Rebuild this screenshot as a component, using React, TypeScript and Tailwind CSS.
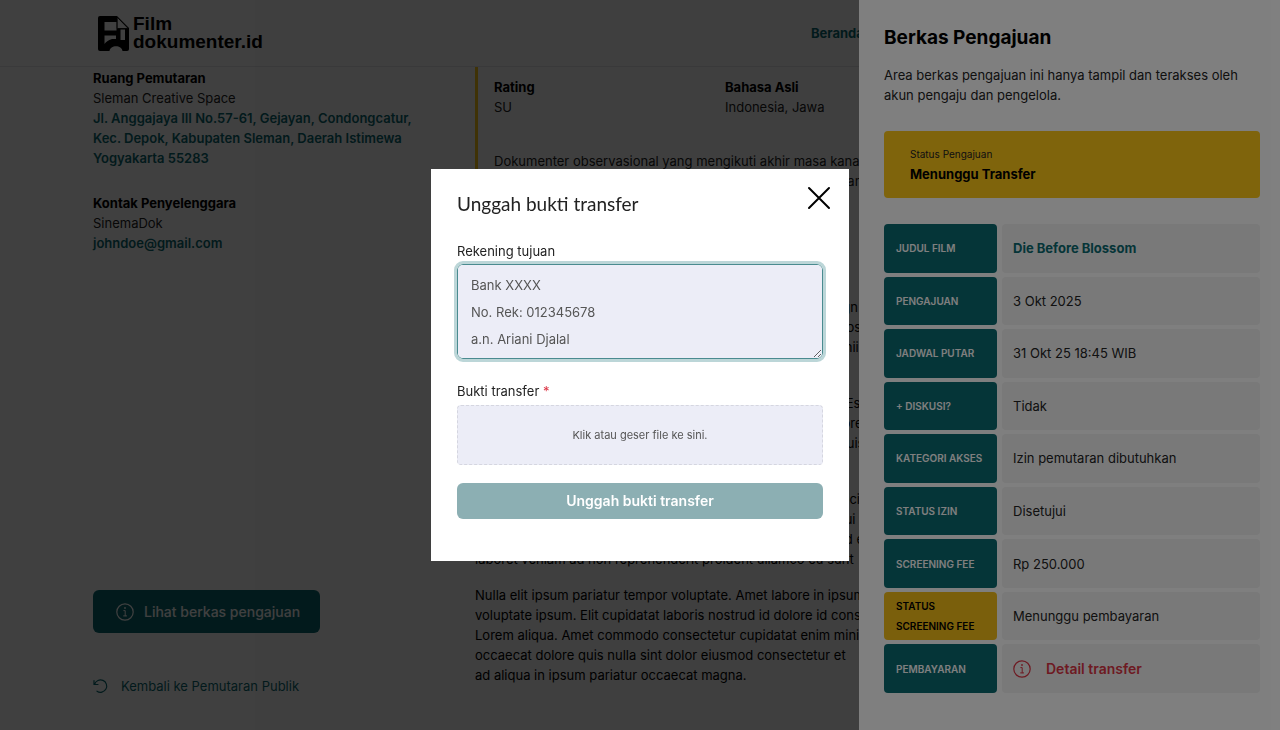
import React from 'react';

const filmInfo = [
  { label: 'Rating', value: 'SU' },
  { label: 'Bahasa Asli', value: 'Indonesia, Jawa' },
];

const paragraphs = [
  [
    'Exercitation sunt laboris aliquip tempor ea irure duis non magn n',
    'culpa laborum cillum minim est dolor sed officia elit magna dos',
    'veniam ad incididunt fugiat labore nisi commodo et dolor sit nii',
  ],
  [
    'Irure dolor in deserunt mollit aute veniam quis sint et dolor i. Est',
    'laborum anim cupidatat non proident sunt in culpa id est dolore',
    'tempor ullamco ea nostrud exercitation consequat ad anim quis',
  ],
  [
    'Reprehenderit eu sit magna id consequat aliquip sunt nisi officia',
    'duis enim tempor incididunt nisi dolor ut labore et minim sequi',
    'consectetur voluptate do ex commodo minim laboris est ea id e',
    'laboret veniam ad non reprehenderit proident ullamco eu sunt',
  ],
  [
    'Nulla elit ipsum pariatur tempor voluptate. Amet labore in ipsum',
    'voluptate ipsum. Elit cupidatat laboris nostrud id dolore id cons',
    'Lorem aliqua. Amet commodo consectetur cupidatat enim minim',
    'occaecat dolore quis nulla sint dolor eiusmod consectetur et',
    'ad aliqua in ipsum pariatur occaecat magna.',
  ],
];

const rows = [
  { label: 'Judul Film', value: 'Die Before Blossom', type: 'link' },
  { label: 'Pengajuan', value: '3 Okt 2025' },
  { label: 'Jadwal Putar', value: '31 Okt 25 18:45 WIB' },
  { label: '+ Diskusi?', value: 'Tidak' },
  { label: 'Kategori Akses', value: 'Izin pemutaran dibutuhkan' },
  { label: 'Status Izin', value: 'Disetujui' },
  { label: 'Screening Fee', value: 'Rp 250.000' },
  { label: 'Status Screening Fee', value: 'Menunggu pembayaran', highlight: true },
  { label: 'Pembayaran', value: 'Detail transfer', type: 'action' },
];

const InfoIcon: React.FC = () => (
  <svg className="w-[18px] h-[18px] shrink-0" viewBox="0 0 18 18" fill="none" stroke="currentColor" strokeWidth="1.2" strokeLinecap="round" aria-hidden="true">
    <circle cx="9" cy="9" r="8.2" />
    <path d="M7.8 7.6h1.4v5.2M7.6 12.9h3" strokeWidth="1" />
    <circle cx="9" cy="5" r="0.9" fill="currentColor" stroke="none" />
  </svg>
);

const Logo: React.FC = () => (
  <a href="#" className="flex items-center gap-1 text-black" aria-label="Filmdokumenter.id">
    <svg className="w-[31px] h-[35px]" viewBox="0 0 31 35" aria-hidden="true">
      <path d="M2 0H19L31 12V33a2 2 0 0 1-2 2H2a2 2 0 0 1-2-2V2a2 2 0 0 1 2-2Z" fill="currentColor" />
      <path d="M6.5 6H18.5V14.5H6.5ZM6.5 19.5H18V23H14C10 24 8 26 6.5 28ZM22.5 13.5H27V24H22.5ZM11.5 35C12 28.5 24 28.5 24.5 35Z" fill="#fff" />
      <path d="M19.2 1.2V12.5H30.2Z" fill="#fff" stroke="currentColor" strokeWidth="0.8" />
    </svg>
    <span className="font-['Liberation_Sans',sans-serif] text-[19px] leading-[18px] font-bold">
      Film
      <br />
      dokumenter.id
    </span>
  </a>
);

const FilmPage: React.FC = () => (
  <div className="min-h-screen flex flex-col bg-white text-[#222]">
    <header className="flex items-center justify-between h-[67px] pl-[98px] pr-[93px] border-b border-gray-200">
      <Logo />
      <nav className="w-[376px]">
        <a href="#" className="font-bold text-[#0b6a71]">Beranda</a>
      </nav>
    </header>
    <main className="flex-1 grid grid-cols-[350px_1fr] gap-8 px-[93px] pb-[34px]">
      <div className="flex flex-col justify-between items-start pt-px pr-4">
        <div className="space-y-[25px]">
          <section>
            <h3 className="font-bold text-black">Ruang Pemutaran</h3>
            <p>Sleman Creative Space</p>
            <a href="#" className="font-semibold text-[#0b6a71]">
              Jl. Anggajaya III No.57-61, Gejayan, Condongcatur, Kec. Depok, Kabupaten Sleman, Daerah Istimewa Yogyakarta 55283
            </a>
          </section>
          <section>
            <h3 className="font-bold text-black">Kontak Penyelenggara</h3>
            <p>SinemaDok</p>
            <a href="#" className="font-semibold text-[#0b6a71]">johndoe@gmail.com</a>
          </section>
        </div>
        <div className="space-y-[43px]">
          <button type="button" className="flex items-center gap-2.5 h-[43px] pl-[23px] pr-5 rounded-md bg-[#0b6a71] text-[14px] font-medium text-white">
            <InfoIcon />
            Lihat berkas pengajuan
          </button>
          <a href="#" className="flex items-center gap-3 text-[#0b6a71]">
            <svg className="w-4 h-4" viewBox="0 0 16 16" fill="none" stroke="currentColor" strokeWidth="1.2" strokeLinecap="round" aria-hidden="true">
              <path d="M1 2.5v4h4M1.6 6.2A6.2 6.2 0 1 1 4 13.2" />
            </svg>
            Kembali ke Pemutaran Publik
          </a>
        </div>
      </div>
      <div className="overflow-hidden whitespace-nowrap">
        <div className="border-l-[3px] border-[#ffc818] pl-4 pt-2.5 pb-6">
          <dl className="grid grid-cols-3">
            {filmInfo.map((item) => (
              <div key={item.label}>
                <dt className="font-bold text-black">{item.label}</dt>
                <dd>{item.value}</dd>
              </div>
            ))}
          </dl>
          <p className="mt-[34px]">
            Dokumenter observasional yang mengikuti akhir masa kanak
            <br />
            dua anak perempuan di sebuah desa, sebelum mereka akan
          </p>
        </div>
        <div className="mt-[82px] space-y-9 text-black">
          {paragraphs.slice(0, 2).map((lines) => (
            <p key={lines[0]}>
              {lines.map((line) => (
                <span key={line} className="block">{line}</span>
              ))}
            </p>
          ))}
          <div className="space-y-4">
            {paragraphs.slice(2).map((lines) => (
              <p key={lines[0]}>
                {lines.map((line) => (
                  <span key={line} className="block">{line}</span>
                ))}
              </p>
            ))}
          </div>
        </div>
      </div>
    </main>
  </div>
);

const SubmissionDrawer: React.FC = () => (
  <aside className="w-[421px] h-full overflow-y-auto bg-white pl-[25px] pr-5 pt-[26px] text-[#222]">
    <h2 className="text-[19px] leading-6 font-bold text-black">Berkas Pengajuan</h2>
    <p className="mt-[15px]">Area berkas pengajuan ini hanya tampil dan terakses oleh akun pengaju dan pengelola.</p>
    <div className="mt-[26px] px-[26px] pt-[13px] pb-3.5 rounded bg-[#ffc818]">
      <p className="text-[10px] leading-5">Status Pengajuan</p>
      <p className="font-bold text-black">Menunggu Transfer</p>
    </div>
    <div className="mt-[22px] -mx-[5px]">
      <table className="w-full h-[477px] table-fixed border-separate border-spacing-x-[5px] border-spacing-y-1">
        <tbody>
          {rows.map((row) => (
            <tr key={row.label} className="h-12">
              <th
                scope="row"
                className={`w-[113px] px-3 rounded text-left text-[10px] leading-5 font-semibold uppercase ${
                  row.highlight ? 'bg-[#f5bf18] text-black' : 'bg-[#0b6a71] text-white'
                }`}
              >
                {row.label}
              </th>
              <td className="px-[11px] rounded bg-[#f3f3f3]">
                {row.type === 'link' && <a href="#" className="font-bold text-[#0b6a71]">{row.value}</a>}
                {row.type === 'action' && (
                  <button type="button" className="flex items-center gap-[15px] text-[14px] font-semibold text-[#dc3545]">
                    <InfoIcon />
                    {row.value}
                  </button>
                )}
                {!row.type && row.value}
              </td>
            </tr>
          ))}
        </tbody>
      </table>
    </div>
  </aside>
);

const UploadModal: React.FC = () => (
  <div role="dialog" aria-modal="true" aria-labelledby="upload-title" className="w-[418px] bg-white px-[26px] pt-[17px] pb-[42px] text-[#222]">
    <div className="flex items-start justify-between">
      <h2 id="upload-title" className="pt-1 font-['Lato',sans-serif] text-[19px] leading-7">Unggah bukti transfer</h2>
      <button type="button" aria-label="Tutup" className="-mr-2 text-black">
        <svg className="w-6 h-6" viewBox="0 0 24 24" fill="none" stroke="currentColor" strokeWidth="2" strokeLinecap="round" aria-hidden="true">
          <path d="M2 2l20 20M22 2L2 22" />
        </svg>
      </button>
    </div>
    <form className="mt-[23px]">
      <label htmlFor="account" className="block">Rekening tujuan</label>
      <textarea
        id="account"
        readOnly
        defaultValue={'Bank XXXX\nNo. Rek: 012345678\na.n. Ariani Djalal'}
        className="block w-full h-[95px] mt-[3px] px-[13px] py-[7px] leading-[27px] rounded-md border border-[#4a8b90] bg-[#ecedf7] text-[#555] outline-3 outline-[#bcd6d8]"
      />
      <label htmlFor="proof" className="block mt-[22px]">
        Bukti transfer <span className="text-[#dc3545]">*</span>
      </label>
      <label htmlFor="proof" className="flex items-center justify-center h-[60px] mt-1 rounded border border-dashed border-[#d5d6e0] bg-[#ecedf7] text-[11px] text-[#555]">
        Klik atau geser file ke sini.
        <input id="proof" type="file" className="sr-only" />
      </label>
      <button type="button" className="w-full h-9 mt-[18px] rounded-md bg-[#8cafb3] text-[14px] font-semibold text-white">
        Unggah bukti transfer
      </button>
    </form>
  </div>
);

export default function App() {
  return (
    <div className="font-['Inter',sans-serif] text-[13px] leading-5">
      <FilmPage />
      <div className="fixed inset-0 z-10 flex justify-end bg-black/50">
        <SubmissionDrawer />
      </div>
      <div className="fixed inset-0 z-20 flex items-center justify-center bg-black/50">
        <UploadModal />
      </div>
    </div>
  );
}
